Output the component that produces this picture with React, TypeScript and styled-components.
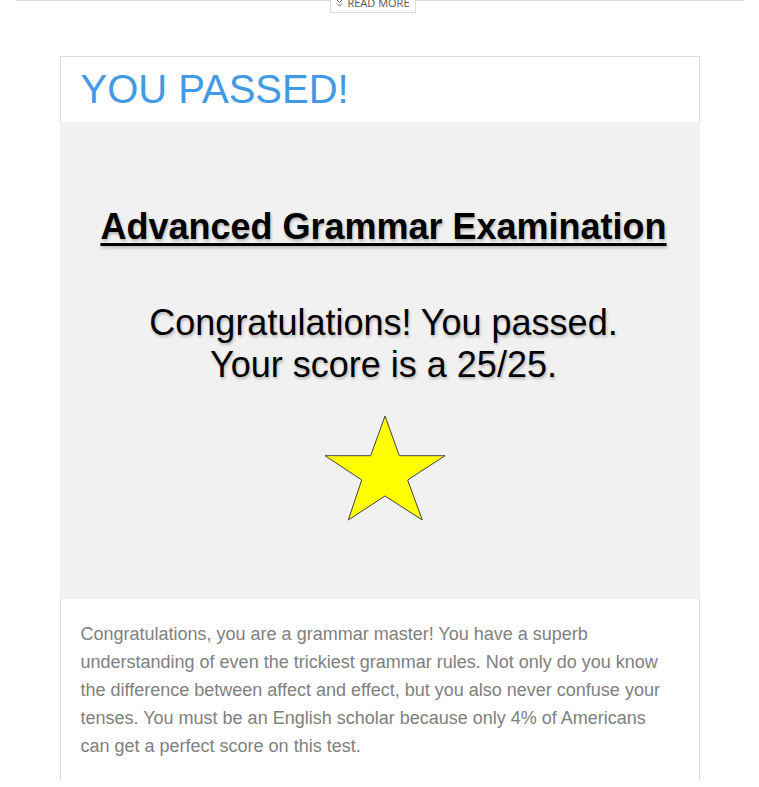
import React from "react";
import styled, { createGlobalStyle } from "styled-components";

const Global = createGlobalStyle`
  html, body { margin: 0; padding: 0; background: #fff; }
  body { font-family: "Liberation Sans", Arial, sans-serif; }
`;

const Page = styled.div`
  width: 759px;
  overflow: hidden;
`;

const TopBar = styled.div`
  margin: 0 15px 0 16px;
  border-top: 1px solid #dcdcdc;
  height: 12px;
  display: flex;
  justify-content: center;
`;

const ReadMore = styled.button`
  box-sizing: border-box;
  height: 21px;
  margin-top: -9px;
  margin-left: -14px;
  padding: 0 5px 0 5px;
  border: 1px solid #dcdcdc;
  background: #fff;
  display: flex;
  align-items: center;
  gap: 4px;
  font-family: "Open Sans", sans-serif;
  font-size: 11px;
  line-height: 20px;
  color: #555;
  text-transform: uppercase;
  cursor: pointer;
`;

const Card = styled.article`
  box-sizing: border-box;
  width: 640px;
  margin: 43px auto 0;
  border: 1px solid #dadada;
  border-bottom: none;
  background: #fff;
`;

const Title = styled.h1`
  margin: 0;
  padding: 8px 20px 9px;
  font-family: "Liberation Sans", Arial, sans-serif;
  font-weight: 400;
  font-size: 40px;
  line-height: 48px;
  color: #4499e5;
`;

const Banner = styled.div`
  margin: 0 -1px;
  height: 477px;
  background: #f1f1f1;
  display: flex;
  flex-direction: column;
  align-items: center;
  padding: 85px 0 0 8px;
  box-sizing: border-box;
  font-family: "Liberation Sans", Arial, sans-serif;
  color: #000;
  text-shadow: 1px 2px 3px rgba(0, 0, 0, 0.25);
`;

const ExamTitle = styled.h2`
  margin: 0;
  font-size: 36px;
  line-height: 40px;
  font-weight: 700;
  text-decoration: underline;
  text-decoration-thickness: 3px;
  text-underline-offset: 4px;
  white-space: nowrap;
`;

const Result = styled.p`
  margin: 55px 0 0;
  font-size: 36px;
  line-height: 42px;
  text-align: center;
  white-space: nowrap;
`;

const StarWrap = styled.div`
  margin-top: 28px;
  margin-left: 2px;
  width: 124px;
  height: 108px;
`;

const Body = styled.p`
  margin: 0;
  padding: 21px 22px 20px 20px;
  font-family: "Liberation Sans", Arial, sans-serif;
  font-size: 18px;
  line-height: 28px;
  color: #808080;
`;

export default function App() {
  return (
    <Page>
      <Global />
      <TopBar>
        <ReadMore>
          <svg width="7" height="10" viewBox="0 0 7 10" fill="none" stroke="#666" strokeWidth="1">
            <path d="M1 2 L3.5 4.5 L6 2" />
            <path d="M1 5.5 L3.5 8 L6 5.5" />
          </svg>
          Read More
        </ReadMore>
      </TopBar>
      <Card>
        <Title>YOU PASSED!</Title>
        <Banner>
          <ExamTitle>Advanced Grammar Examination</ExamTitle>
          <Result>
            Congratulations! You passed.
            <br />
            Your score is a 25/25.
          </Result>
          <StarWrap>
            <svg width="124" height="108" viewBox="0 0 124 108">
              <polygon
                points="62,2 76.3,41.7 122,41.7 84.7,66 99.3,106 62,82 25.3,106 38.7,66 2,41.7 47.7,41.7"
                fill="#ffff00"
                stroke="#444"
                strokeWidth="1"
                strokeLinejoin="miter"
              />
            </svg>
          </StarWrap>
        </Banner>
        <Body>
          Congratulations, you are a grammar master! You have a superb understanding of even
          the trickiest grammar rules. Not only do you know the difference between affect and
          effect, but you also never confuse your tenses. You must be an English scholar because
          only 4% of Americans can get a perfect score on this test.
        </Body>
      </Card>
    </Page>
  );
}
